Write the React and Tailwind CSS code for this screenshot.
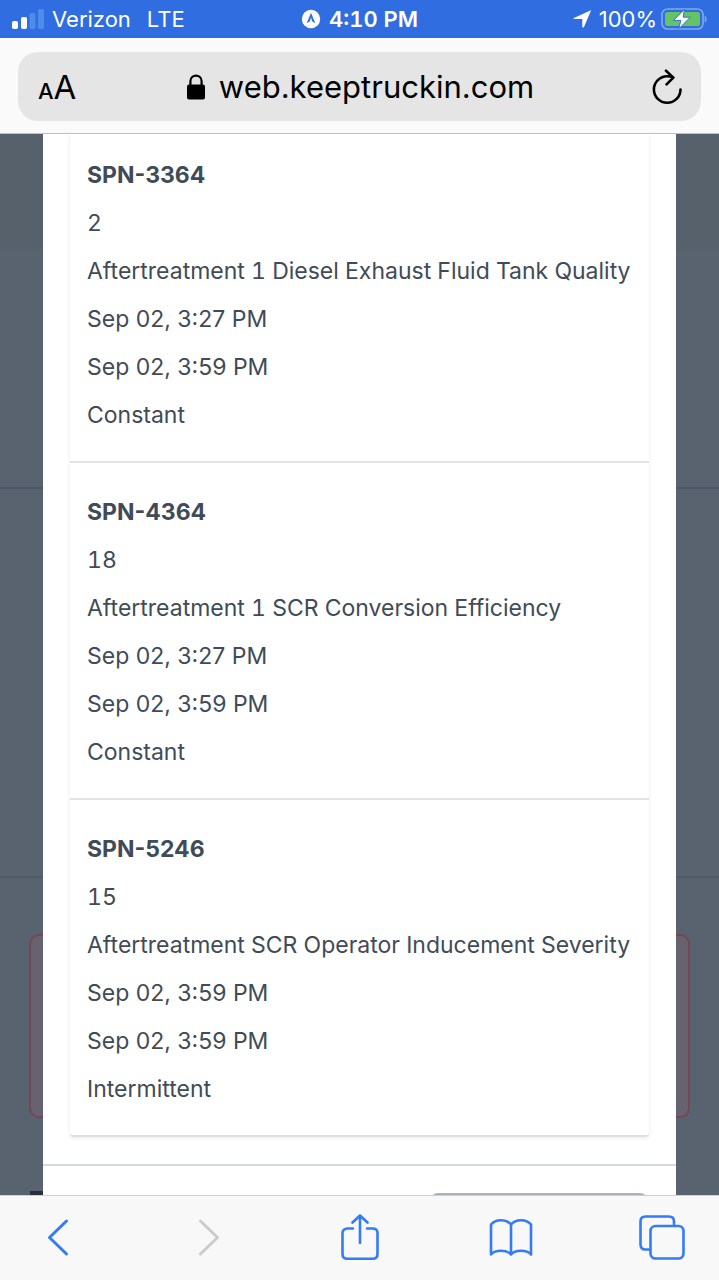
const faults = [
  {
    code: "SPN-3364",
    fmi: "2",
    description: "Aftertreatment 1 Diesel Exhaust Fluid Tank Quality",
    first: "Sep 02, 3:27 PM",
    last: "Sep 02, 3:59 PM",
    status: "Constant",
  },
  {
    code: "SPN-4364",
    fmi: "18",
    description: "Aftertreatment 1 SCR Conversion Efficiency",
    first: "Sep 02, 3:27 PM",
    last: "Sep 02, 3:59 PM",
    status: "Constant",
  },
  {
    code: "SPN-5246",
    fmi: "15",
    description: "Aftertreatment SCR Operator Inducement Severity",
    first: "Sep 02, 3:59 PM",
    last: "Sep 02, 3:59 PM",
    status: "Intermittent",
  },
];

function StatusBar() {
  return (
    <header className="grid h-[38px] grid-cols-[1fr_auto_1fr] items-center bg-[#2f6de1] pr-3 pl-3 text-[22px] leading-7 text-white">
      <div className="flex items-center gap-2">
        <svg className="h-5 w-8" viewBox="0 0 32 20" fill="#fff" aria-hidden="true">
          <rect x="0" y="12" width="6" height="8" rx="1.8" />
          <rect x="9" y="8" width="6" height="12" rx="1.8" />
          <rect x="17.500" y="4" width="6" height="16" rx="1.8" fill="#4f8bea" />
          <rect x="26" y="0" width="6" height="20" rx="1.8" fill="#4f8bea" />
        </svg>
        <span>Verizon</span>
        <span className="ml-2">LTE</span>
      </div>
      <div className="flex items-center gap-2">
        <svg className="h-5 w-5" viewBox="0 0 20 20" aria-hidden="true">
          <circle cx="10" cy="10" r="9.200" fill="#fff" />
          <path d="M10 3.800 14.300 14.300 10 11.800 5.700 14.300Z" fill="#2f6de1" />
          <path d="M10 8.500 11.200 12.400H8.800Z" fill="#fff" />
        </svg>
        <span className="font-semibold tabular-nums">4:10 PM</span>
      </div>
      <div className="flex items-center justify-end gap-1">
        <svg className="mr-1 h-[18px] w-[18px]" viewBox="0 0 18 18" fill="#fff" aria-hidden="true">
          <path d="M17.300.400C17.700.200 18 .500 17.800.900L11 17C10.700 17.700 9.300 17.500 9.300 16.900V9.300C9.300 9 9.200 8.900 8.900 8.900H1.100C.400 8.900.300 8.200.900 7.900Z" />
        </svg>
        <span>100%</span>
        <svg className="h-[22px] w-[46px]" viewBox="0 0 46 22" aria-hidden="true">
          <rect x="1" y="1" width="41" height="20" rx="5.500" fill="none" stroke="#82a8ec" strokeWidth="1.600" />
          <rect x="4" y="4" width="35" height="14" rx="2.500" fill="#63c466" />
          <path d="M43.700 7.500c2.400.700 2.400 6.300 0 7z" fill="#82a8ec" />
          <path d="M23.500 1.200 12.500 12.400h7.300l-2 8.400L29.300 9.200H22.200Z" fill="#fff" stroke="#2f6de1" strokeWidth="1" />
        </svg>
      </div>
    </header>
  );
}

function AddressBar() {
  return (
    <div className="border-b border-[#c0c0c2] bg-[#fafafa] px-[18px] pt-[14px] pb-3">
      <div className="grid h-[69px] grid-cols-[1fr_auto_1fr] items-center rounded-[20px] bg-[#e5e5e5] pr-[18px] pl-5 text-black">
        <button type="button" aria-label="Page settings" className="flex items-baseline justify-self-start pt-1 leading-10">
          <span className="text-[22px] font-medium">A</span>
          <span className="text-[33px]">A</span>
        </button>
        <div className="flex items-center gap-[14px]">
          <svg className="h-[26px] w-[18px]" viewBox="0 0 18 26" aria-hidden="true">
            <rect x="0" y="10.500" width="18" height="15" rx="2" />
            <path d="M3.400 12V7.300C3.400 -.300 14.600 -.300 14.600 7.300V12" fill="none" stroke="#000" strokeWidth="2.200" />
          </svg>
          <span className="text-[31px] leading-10">web.keeptruckin.com</span>
        </div>
        <button type="button" aria-label="Reload" className="justify-self-end">
          <svg className="h-9 w-8" viewBox="0 0 32 36" fill="none" stroke="#000" strokeWidth="2.600" strokeLinecap="round" strokeLinejoin="round" aria-hidden="true">
            <path d="M29.500 20.500A13.300 13.300 0 1 1 16.200 7.200c2 0 4 .300 5.800 1.100" />
            <path d="M15 1.700 22.300 8.600 15.600 15.400" />
          </svg>
        </button>
      </div>
    </div>
  );
}

function PageBehind() {
  return (
    <div aria-hidden="true" className="col-start-1 row-start-1 flex flex-col bg-[#59636f]">
      <div className="h-[116px] bg-[#56616b]" />
      <div className="h-[239px] border-b-2 border-[#4c586a]" />
      <div className="h-[389px] border-b-2 border-[#505b68]" />
      <div className="mx-[29px] mt-[56px] h-[184px] rounded-[10px] border-2 border-[#774654] bg-[#66636f]" />
      <div className="mt-auto ml-[30px] h-1 w-10 bg-[#27313d]" />
    </div>
  );
}

function FaultDialog() {
  return (
    <section aria-label="Fault codes" className="col-start-1 row-start-1 mx-[43px] bg-white">
      <div className="mx-[26px] mb-[27px] rounded-b border-x border-[#f6f6f6] shadow-[0_2px_3px_rgba(0,0,0,0.06)]">
        {faults.map((fault) => (
          <article
            key={fault.code}
            className="border-b-2 border-[#e2e3e5] px-[17px] pt-[25px] pb-[22px] text-[23px] leading-[48px] text-[#414b57] first:pt-[17px] last:rounded-b last:border-[#dedfe1]"
          >
            <h2 className="font-bold">{fault.code}</h2>
            <p className="tabular-nums">{fault.fmi}</p>
            <p className="whitespace-nowrap tabular-nums">{fault.description}</p>
            <p>{fault.first}</p>
            <p>{fault.last}</p>
            <p>{fault.status}</p>
          </article>
        ))}
      </div>
      <div className="flex h-[31px] justify-end overflow-hidden border-t-2 border-[#d3d8dd] pt-[27px] pr-7">
        <button type="button" aria-label="Close" className="h-16 w-[218px] shrink-0 rounded-lg border-[3px] border-[#a9b2ba] bg-white" />
      </div>
    </section>
  );
}

const toolButton = "flex w-[46px] justify-center";

function Toolbar() {
  return (
    <nav
      aria-label="Browser"
      className="flex h-[85px] items-center justify-between border-t border-[#cfcfd1] bg-[#f8f8f9] pr-[34px] pl-[35px]"
    >
      <button type="button" aria-label="Back" className={toolButton}>
        <svg className="h-10 w-6" viewBox="0 0 24 40" fill="none" stroke="#347bf6" strokeWidth="3" strokeLinecap="round" strokeLinejoin="round">
          <path d="M20.500 3 3.500 19.500 20.500 36" />
        </svg>
      </button>
      <button type="button" aria-label="Forward" disabled className={toolButton}>
        <svg className="h-10 w-6" viewBox="0 0 24 40" fill="none" stroke="#cbcbcc" strokeWidth="3" strokeLinecap="round" strokeLinejoin="round">
          <path d="M3.500 3 20.500 19.500 3.500 36" />
        </svg>
      </button>
      <button type="button" aria-label="Share" className={toolButton}>
        <svg className="h-12 w-[38px]" viewBox="0 0 38 48" fill="none" stroke="#347bf6" strokeWidth="2.600" strokeLinecap="round" strokeLinejoin="round">
          <path d="M12 14.500H6.500C3.500 14.500 1.500 16.300 1.500 19V40C1.500 43 3.500 44.800 6.500 44.800H31.500C34.500 44.800 36.500 43 36.500 40V19C36.500 16.300 34.500 14.500 31.500 14.500H26" />
          <path d="M19 29V1.500M11.500 8.500 19 1.500 26.500 8.500" />
        </svg>
      </button>
      <button type="button" aria-label="Bookmarks" className={toolButton}>
        <svg className="h-10 w-11" viewBox="0 0 44 40" fill="none" stroke="#347bf6" strokeWidth="2.600" strokeLinejoin="round">
          <path d="M22 6.500C17.500 .800 6.500 .800 2 6.500V36.500C6.500 31.500 17.500 31.500 22 36.500C26.500 31.500 37.500 31.500 42 36.500V6.500C37.500 .800 26.500 .800 22 6.500ZM22 6.500V36.500" />
        </svg>
      </button>
      <button type="button" aria-label="Tabs" className={toolButton}>
        <svg className="h-[46px] w-[46px]" viewBox="0 0 46 46" fill="none" stroke="#347bf6" strokeWidth="2.600" strokeLinejoin="round">
          <path d="M11.500 34.500H6.500C3.300 34.500 1.500 32.700 1.500 29.500V6.500C1.500 3.300 3.300 1.500 6.500 1.500H30C33.200 1.500 35 3.300 35 6.500V11" />
          <rect x="11.500" y="11" width="33" height="32.500" rx="5" />
        </svg>
      </button>
    </nav>
  );
}

export default function App() {
  return (
    <div className="flex min-h-screen flex-col bg-[#f8f8f9] font-[Inter,sans-serif]">
      <StatusBar />
      <AddressBar />
      <main className="grid flex-1">
        <PageBehind />
        <FaultDialog />
      </main>
      <Toolbar />
    </div>
  );
}
